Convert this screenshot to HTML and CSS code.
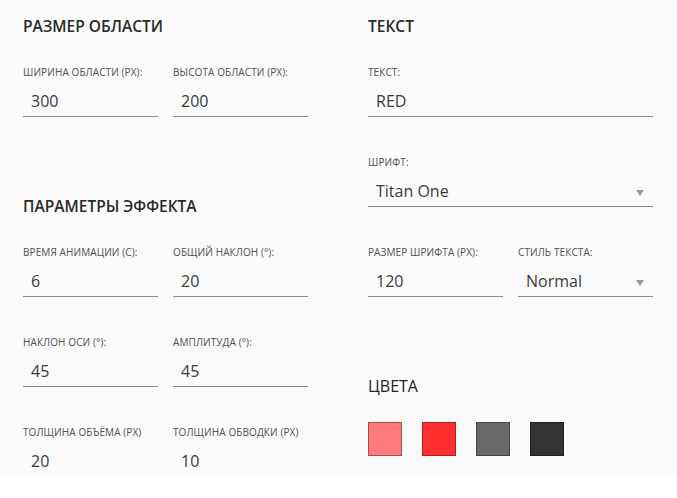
FILE: index.html
```html
<!DOCTYPE html>
<html lang="ru">
<head>
<meta charset="utf-8">
<link rel="stylesheet" href="styles.css">
</head>
<body>
<div class="app">
  <div class="panel">
    <h2 class="heading">РАЗМЕР ОБЛАСТИ</h2>
    <div class="row">
      <div class="field"><div class="label">ШИРИНА ОБЛАСТИ (PX):</div><div class="input">300</div></div>
      <div class="field"><div class="label">ВЫСОТА ОБЛАСТИ (PX):</div><div class="input">200</div></div>
    </div>
    <h2 class="heading spaced">ПАРАМЕТРЫ ЭФФЕКТА</h2>
    <div class="row">
      <div class="field"><div class="label">ВРЕМЯ АНИМАЦИИ (С):</div><div class="input">6</div></div>
      <div class="field"><div class="label">ОБЩИЙ НАКЛОН (°):</div><div class="input">20</div></div>
    </div>
    <div class="row">
      <div class="field"><div class="label">НАКЛОН ОСИ (°):</div><div class="input">45</div></div>
      <div class="field"><div class="label">АМПЛИТУДА (°):</div><div class="input">45</div></div>
    </div>
    <div class="row">
      <div class="field"><div class="label">ТОЛЩИНА ОБЪЁМА (PX)</div><div class="input">20</div></div>
      <div class="field"><div class="label">ТОЛЩИНА ОБВОДКИ (PX)</div><div class="input">10</div></div>
    </div>
  </div>
  <div class="panel">
    <h2 class="heading">ТЕКСТ</h2>
    <div class="field"><div class="label">ТЕКСТ:</div><div class="input">RED</div></div>
    <div class="field"><div class="label">ШРИФТ:</div><div class="input select">Titan One<span class="arrow"></span></div></div>
    <div class="row">
      <div class="field"><div class="label">РАЗМЕР ШРИФТА (PX):</div><div class="input">120</div></div>
      <div class="field"><div class="label">СТИЛЬ ТЕКСТА:</div><div class="input select">Normal<span class="arrow"></span></div></div>
    </div>
    <h2 class="heading spaced light">ЦВЕТА</h2>
    <div class="swatches">
      <div class="swatch c1"></div>
      <div class="swatch c2"></div>
      <div class="swatch c3"></div>
      <div class="swatch c4"></div>
    </div>
  </div>
</div>
</body>
</html>
```

FILE: styles.css
```css
html, body {
  margin: 0;
  padding: 0;
  background: #ffffff;
}
body {
  font-family: "Open Sans", "Noto Sans", "DejaVu Sans", sans-serif;
  color: #333;
}
.app {
  height: 460px;
  overflow: hidden;
  background: #fafafa;
  padding: 16px 0 0 23px;
  display: grid;
  grid-template-columns: 285px 285px;
  column-gap: 60px;
  align-items: start;
}
.panel {
  display: flex;
  flex-direction: column;
}
.heading {
  margin: 0 0 30px 0;
  font-size: 15.5px;
  line-height: 20px;
  font-weight: 600;
  color: #2a2a2a;
}
.heading.spaced {
  margin-top: 40px;
}
.heading.light {
  font-weight: 400;
  font-size: 16px;
  color: #222;
}
.row {
  display: grid;
  grid-template-columns: 135px 135px;
  column-gap: 15px;
}
.field {
  display: flex;
  flex-direction: column;
  margin-bottom: 39px;
}
.label {
  font-size: 10px;
  line-height: 12px;
  letter-spacing: 0.1px;
  color: #505050;
  white-space: nowrap;
}
.input {
  margin-top: 7px;
  height: 31px;
  line-height: 33px;
  border-bottom: 1px solid #8a8a8a;
  padding-left: 8px;
  font-size: 16px;
  color: #3a3a3a;
  position: relative;
}
.arrow {
  position: absolute;
  right: 9px;
  top: 15px;
  width: 0;
  height: 0;
  border-left: 4.5px solid transparent;
  border-right: 4.5px solid transparent;
  border-top: 6px solid #9a9a9a;
}
.swatches {
  display: flex;
  gap: 20px;
  margin-top: -4px;
}
.swatch {
  width: 32px;
  height: 32px;
  border: 1px solid rgba(0, 0, 0, 0.35);
}
.c1 { background: #ff7a7a; }
.c2 { background: #ff2f2f; }
.c3 { background: #696969; }
.c4 { background: #333333; }
```
